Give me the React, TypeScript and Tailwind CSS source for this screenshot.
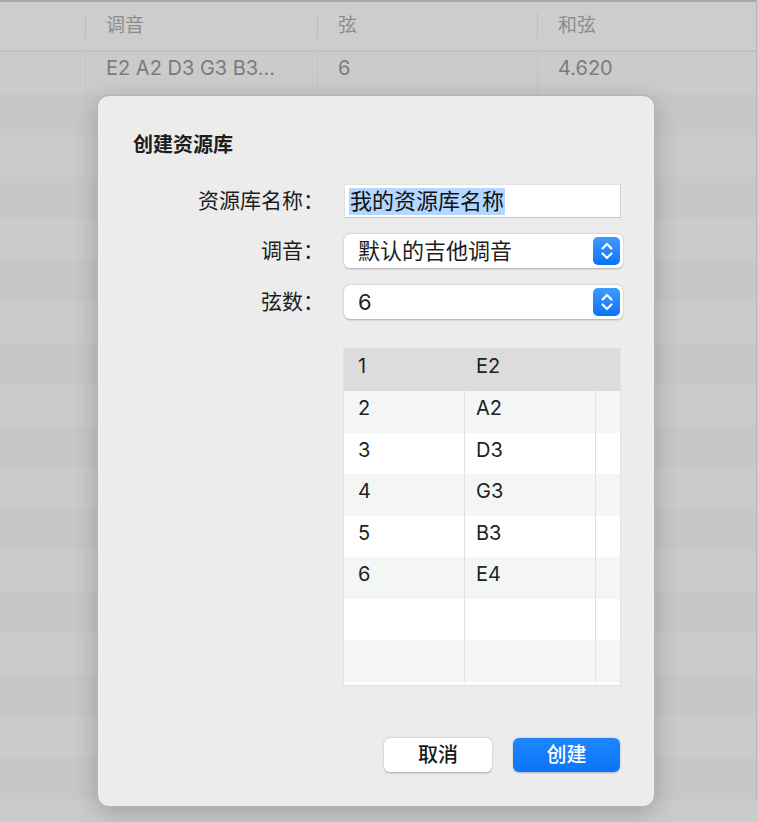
const bgRows = Array.from({ length: 18 });

const strings = [
  { n: '1', note: 'E2' },
  { n: '2', note: 'A2' },
  { n: '3', note: 'D3' },
  { n: '4', note: 'G3' },
  { n: '5', note: 'B3' },
  { n: '6', note: 'E4' },
  { n: '', note: '' },
  { n: '', note: '' },
];

function Stepper() {
  return (
    <span className="flex items-center justify-center w-[27px] h-[28px] rounded-[5px] bg-gradient-to-b from-[#3d9bff] to-[#0a72f7]">
      <svg width="14" height="20" viewBox="0 0 14 20" fill="none" stroke="white" strokeWidth="2.2" strokeLinecap="round" strokeLinejoin="round">
        <path d="M2.5 7.5 L7 3 L11.5 7.5" />
        <path d="M2.5 12.5 L7 17 L11.5 12.5" />
      </svg>
    </span>
  );
}

function Popup({ label }: { label: string }) {
  return (
    <div className="flex items-center justify-between w-[279px] h-[34px] rounded-[6px] bg-white shadow-[0_0.5px_2px_rgba(0,0,0,0.28)] pl-[14px] pr-[3px]">
      <span className="text-[22px] leading-[28px] text-[#1d1d1d]">{label}</span>
      <Stepper />
    </div>
  );
}

function FormRow({ label, children }: { label: string; children: React.ReactNode }) {
  return (
    <div className="flex items-center gap-[20px]">
      <span className="w-[226px] text-right text-[21px] text-[#1d1d1d]">{label}</span>
      {children}
    </div>
  );
}

export default function App() {
  return (
    <div className="relative w-[758px] h-[822px] overflow-hidden bg-[#cbcbcb] font-[Inter,'Noto_Sans_CJK_SC',sans-serif]">
      {/* background table */}
      <div className="border-t-2 border-[#a8a8a8] border-r border-r-[#b9b9b9] w-[757px]">
        <div className="flex h-[50px] items-center border-b-2 border-[#c1c1c1] bg-[#cdcdcd] text-[19px] text-[#8c8c8c]">
          <div className="w-[86px] h-[26px] border-r border-[#bdbdbd]" />
          <div className="w-[232px] h-[26px] border-r border-[#bdbdbd] pl-[20px] leading-[26px]">调音</div>
          <div className="w-[220px] h-[26px] border-r border-[#bdbdbd] pl-[20px] leading-[26px]">弦</div>
          <div className="flex-1 pl-[20px] leading-[26px]">和弦</div>
        </div>
        {bgRows.map((_, i) => (
          <div
            key={i}
            className={`flex h-[41.5px] text-[20px] text-[#7b7b7b] ${i % 2 === 0 ? 'bg-[#cbcbcb]' : 'bg-[#c7c7c7]'}`}
          >
            <div className="w-[86px] border-r border-[#c3c3c3]" />
            <div className="w-[232px] border-r border-[#c3c3c3] pl-[20px] pt-[3px] leading-[26px]">
              {i === 0 ? 'E2 A2 D3 G3 B3...' : ''}
            </div>
            <div className="w-[220px] border-r border-[#c3c3c3] pl-[20px] pt-[3px] leading-[26px]">
              {i === 0 ? '6' : ''}
            </div>
            <div className="flex-1 pl-[20px] pt-[3px] leading-[26px]">{i === 0 ? '4.620' : ''}</div>
          </div>
        ))}
      </div>

      {/* dialog sheet */}
      <div className="absolute left-[97px] top-[95px] w-[558px] h-[712px] rounded-[12px] bg-[#ececec] border border-[#b4b4b4] shadow-[0_6px_24px_rgba(0,0,0,0.22)] flex flex-col">
        <div className="pt-[35px] pl-[35px] h-[63px] text-[20px] font-semibold leading-[28px] text-[#1d1d1d]">
          创建资源库
        </div>

        <div className="mt-[25px] flex flex-col">
          <FormRow label="资源库名称：">
            <div className="flex items-center w-[277px] h-[34px] bg-white border border-[#e1e1e1] border-b-[#c6c6c6] border-r-[#d2d2d2] pl-[4px]">
              <span className="bg-[#b3d7ff] text-[22px] leading-[27px] text-[#111] px-[1px]">我的资源库名称</span>
            </div>
          </FormRow>
          <div className="mt-[16px]">
            <FormRow label="调音：">
              <Popup label="默认的吉他调音" />
            </FormRow>
          </div>
          <div className="mt-[17px]">
            <FormRow label="弦数：">
              <Popup label="6" />
            </FormRow>
          </div>
        </div>

        {/* strings table */}
        <div className="mt-[29px] ml-[245px] w-[278px] h-[338px] border border-[#e2e2e2] bg-white overflow-hidden">
          {strings.map((s, i) => (
            <div
              key={i}
              className={`flex text-[20px] text-[#222] ${i === 0 ? 'h-[42px] bg-[#dcdcdc]' : 'h-[41.5px]'} ${
                i > 0 && i % 2 === 1 ? 'bg-[#f4f5f5]' : ''
              } ${i > 0 && i % 2 === 0 ? 'bg-white' : ''}`}
            >
              <div className="w-[121px] border-r border-[#e0e0e0] pl-[14px] pt-[4px] leading-[26px]">{s.n}</div>
              <div className="w-[131px] border-r border-[#e0e0e0] pl-[11px] pt-[4px] leading-[26px]">{s.note}</div>
              <div className="flex-1" />
            </div>
          ))}
        </div>

        <div className="mt-[52px] pr-[34px] flex justify-end gap-[21px]">
          <button
            type="button"
            className="w-[108px] h-[34px] rounded-[6px] bg-white shadow-[0_0.5px_2px_rgba(0,0,0,0.3)] text-[20px] font-medium text-[#1a1a1a]"
          >
            取消
          </button>
          <button
            type="button"
            className="w-[107px] h-[34px] rounded-[6px] bg-gradient-to-b from-[#1f86ff] to-[#0a74fa] shadow-[0_0.5px_2px_rgba(0,0,0,0.25)] text-[20px] font-medium text-white"
          >
            创建
          </button>
        </div>
      </div>
    </div>
  );
}
